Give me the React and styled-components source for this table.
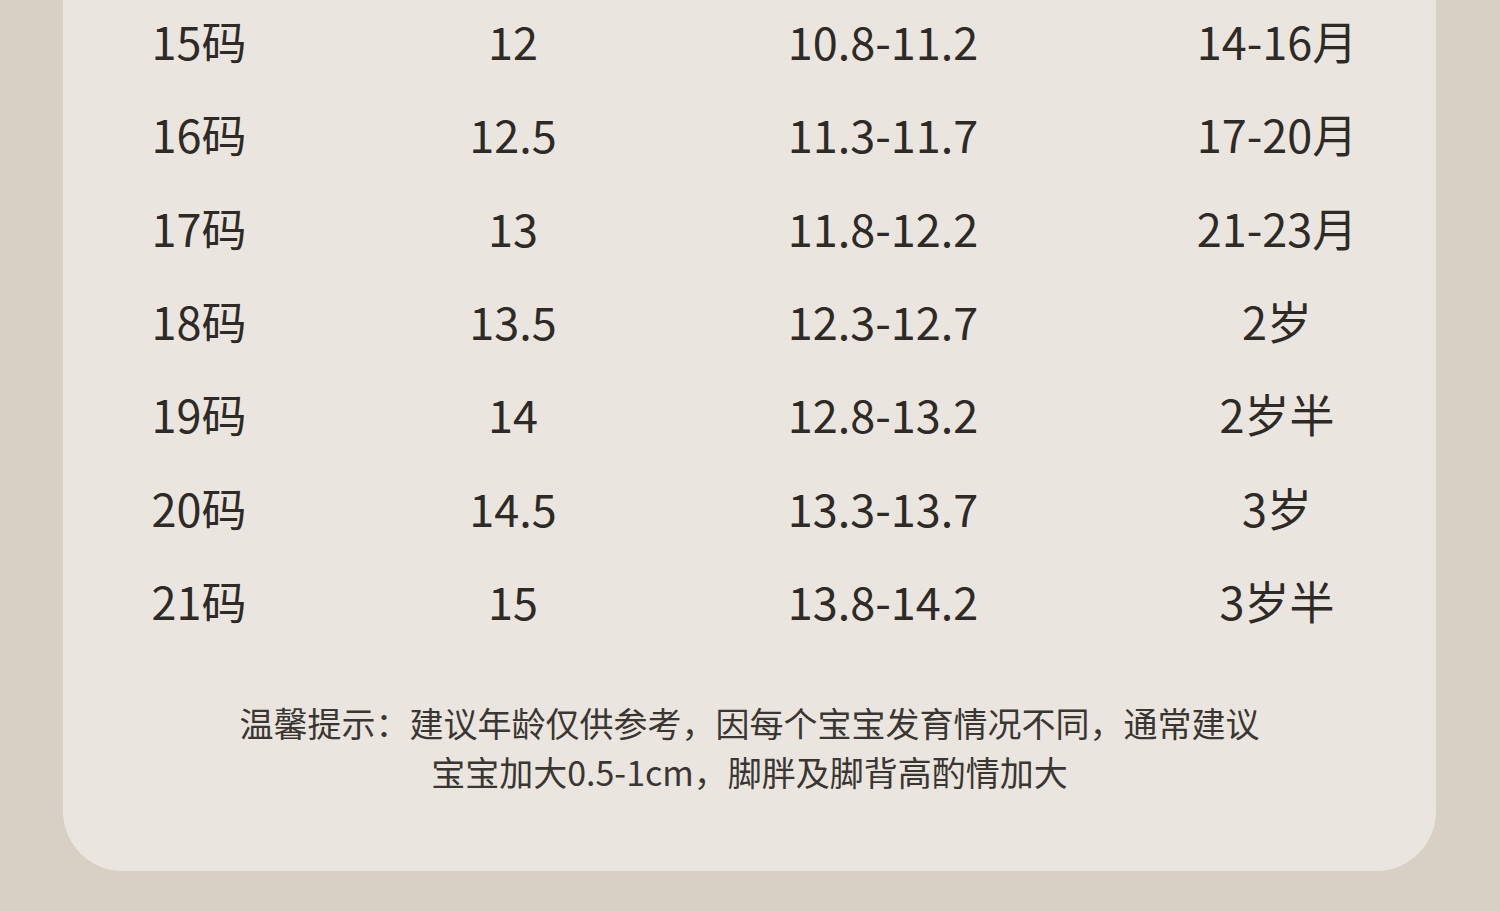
import React from "react";
import styled, { createGlobalStyle } from "styled-components";

const Global = createGlobalStyle`
  html, body { margin: 0; padding: 0; background: #d8d0c4; }
  body { font-family: "Noto Sans CJK SC", "Noto Sans", sans-serif; }
  #root { min-height: 911px; }
`;

const Page = styled.div`
  width: 1500px;
  height: 911px;
  overflow: hidden;
  background: #d8d0c4;
  padding: 0 64px 0 63px;
  box-sizing: border-box;
`;

const Card = styled.div`
  background: #eae6df;
  border-radius: 0 0 60px 60px;
  height: 871px;
  box-sizing: border-box;
  padding-left: 56px;
  display: flex;
  flex-direction: column;
`;

const Table = styled.div`
  display: grid;
  grid-template-columns: 160px 268px 272px 316px;
  grid-auto-rows: 93.33px;
  column-gap: 100px;
  margin-top: -6px;
`;

const Cell = styled.div`
  display: flex;
  align-items: center;
  justify-content: center;
  font-size: 45px;
  color: #2e2a26;
  white-space: nowrap;
`;

const Note = styled.div`
  margin: 51px 0 0 -56px;
  text-align: center;
  font-size: 34px;
  line-height: 49px;
  color: #3a3632;
`;

const rows = [
  ["15码", "12", "10.8-11.2", "14-16月"],
  ["16码", "12.5", "11.3-11.7", "17-20月"],
  ["17码", "13", "11.8-12.2", "21-23月"],
  ["18码", "13.5", "12.3-12.7", "2岁"],
  ["19码", "14", "12.8-13.2", "2岁半"],
  ["20码", "14.5", "13.3-13.7", "3岁"],
  ["21码", "15", "13.8-14.2", "3岁半"],
];

export default function App() {
  return (
    <>
      <Global />
      <Page>
        <Card>
          <Table>
            {rows.map((r, i) =>
              r.map((c, j) => <Cell key={i + "-" + j}>{c}</Cell>)
            )}
          </Table>
          <Note>
            温馨提示：建议年龄仅供参考，因每个宝宝发育情况不同，通常建议
            <br />
            宝宝加大0.5-1cm，脚胖及脚背高酌情加大
          </Note>
        </Card>
      </Page>
    </>
  );
}
